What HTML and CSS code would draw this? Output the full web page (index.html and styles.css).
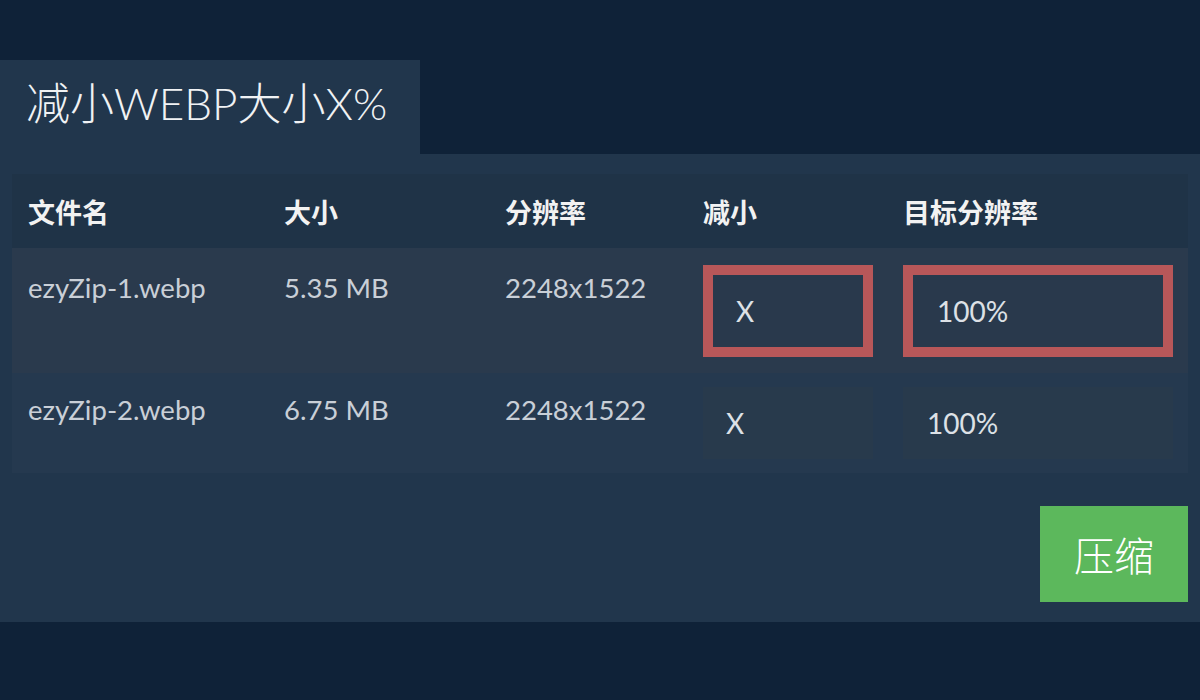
FILE: index.html
```html
<!DOCTYPE html>
<html lang="zh">
<head>
<meta charset="utf-8">
<title>减小WEBP大小X%</title>
<link rel="stylesheet" href="styles.css">
</head>
<body>
<div class="page">
  <div class="tab">减小WEBP大小X%</div>
  <div class="panel">
    <div class="table">
      <div class="row head">
        <div class="cell">文件名</div>
        <div class="cell">大小</div>
        <div class="cell">分辨率</div>
        <div class="cell">减小</div>
        <div class="cell">目标分辨率</div>
      </div>
      <div class="row r1">
        <div class="cell txt">ezyZip-1.webp</div>
        <div class="cell txt">5.35 MB</div>
        <div class="cell txt">2248x1522</div>
        <div class="cell"><input class="inp sm err" type="text" value="X"></div>
        <div class="cell"><input class="inp lg err" type="text" value="100%"></div>
      </div>
      <div class="row r2">
        <div class="cell txt">ezyZip-2.webp</div>
        <div class="cell txt">6.75 MB</div>
        <div class="cell txt">2248x1522</div>
        <div class="cell"><input class="inp sm" type="text" value="X"></div>
        <div class="cell"><input class="inp lg" type="text" value="100%"></div>
      </div>
    </div>
    <div class="actions">
      <button class="btn">压缩</button>
    </div>
  </div>
</div>
</body>
</html>
```
FILE: styles.css
```css
html, body {
  margin: 0;
  padding: 0;
  background: #0f2238;
  font-family: Lato, "Noto Sans CJK SC", sans-serif;
}
.page {
  width: 1200px;
  height: 700px;
  padding-top: 60px;
  box-sizing: border-box;
}
.tab {
  width: 420px;
  height: 94px;
  box-sizing: border-box;
  background: #21364c;
  color: #f0f2f4;
  font-size: 44px;
  font-weight: 300;
  line-height: 86px;
  padding-left: 26px;
}
.panel {
  background: #21364c;
  padding: 20px 12px 20px;
}
.row {
  display: grid;
  grid-template-columns: 256px 221px 198px 200px 301px;
  align-items: start;
}
.cell {
  padding: 0 16px;
}
.head {
  background: #1f3347;
  height: 74px;
  align-items: center;
  color: #f2f2f2;
  font-weight: 700;
  font-size: 27px;
}
.txt {
  color: #c9cfd7;
  font-size: 27.5px;
  line-height: 40px;
  padding-top: 3px;
}
.r1 {
  background: #2a3a4d;
  padding: 17px 0 16px;
}
.r2 {
  background: #25394f;
  padding: 14px 0 14px;
}
.inp {
  display: block;
  height: 72px;
  margin: 0;
  border: 0;
  outline: none;
  padding: 0 23px;
  background: #283a4c;
  color: #dde1e6;
  font-family: Lato, "Noto Sans CJK SC", sans-serif;
  font-size: 28px;
  box-sizing: border-box;
}
.inp.sm { width: 170px; }
.inp.lg { width: 270px; padding-left: 24px; }
.inp.err {
  height: 92px;
  border: 10px solid #b85759;
  background: #29394c;
}
.actions {
  display: flex;
  justify-content: flex-end;
  padding-top: 33px;
}
.btn {
  width: 148px;
  height: 96px;
  border: 0;
  margin: 0;
  background: #5cb85c;
  color: #ffffff;
  font-family: Lato, "Noto Sans CJK SC", sans-serif;
  font-size: 40px;
  font-weight: 300;
  padding: 0;
}
```
